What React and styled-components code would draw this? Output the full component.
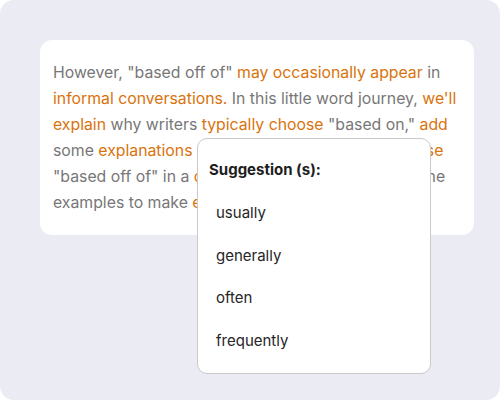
import React from "react";
import styled, { createGlobalStyle } from "styled-components";

const GlobalStyle = createGlobalStyle`
    html, body {
        margin: 0;
        padding: 0;
        background: #ffffff;
    }
    * {
        box-sizing: border-box;
    }
`;

const StyledFrame = styled.div`
    width: 500px;
    height: 400px;
    background: #ebebf3;
    border-radius: 14px;
    padding: 40px 26px 0 40px;
    font-family: Inter, "Noto Sans", sans-serif;
`;

const StyledCard = styled.div`
    position: relative;
    width: 434px;
    background: #ffffff;
    border-radius: 12px;
    padding: 20px 8px 19px 13px;
`;

const StyledText = styled.p`
    margin: 0;
    font-size: 15.8px;
    line-height: 26px;
    color: #777777;
`;

const StyledMark = styled.span`
    color: #d9730d;
`;

const StyledPopup = styled.div`
    position: absolute;
    left: 157px;
    top: 98px;
    width: 234px;
    height: 236px;
    background: #ffffff;
    border: 1px solid #cacaca;
    border-radius: 10px;
    padding: 20px 12px 0 11px;
    display: flex;
    flex-direction: column;
`;

const StyledPopupTitle = styled.div`
    font-size: 15px;
    font-weight: 700;
    line-height: 22px;
    color: #1e1e1e;
    margin-bottom: 11px;
`;

const StyledOption = styled.div`
    font-size: 15px;
    line-height: 22px;
    color: #262626;
    padding: 10px 7px;
    margin-bottom: 0.5px;
    cursor: pointer;
`;

const suggestions = ["usually", "generally", "often", "frequently"];

const App = () => {
    return (
        <>
            <GlobalStyle />
            <StyledFrame>
                <StyledCard>
                    <StyledText>
                        However, "based off of" <StyledMark>may occasionally appear</StyledMark> in{" "}
                        <StyledMark>informal conversations.</StyledMark> In this little word journey,{" "}
                        <StyledMark>we'll explain</StyledMark> why writers <StyledMark>typically choose</StyledMark>{" "}
                        "based on," <StyledMark>add</StyledMark> some <StyledMark>explanations</StyledMark> about why
                        some users <StyledMark>might use</StyledMark> "based off of" in a{" "}
                        <StyledMark>casual context</StyledMark>, and provide some examples to make{" "}
                        <StyledMark>everything</StyledMark> clear.
                    </StyledText>
                    <StyledPopup>
                        <StyledPopupTitle>Suggestion (s):</StyledPopupTitle>
                        {suggestions.map((word) => (
                            <StyledOption key={word}>{word}</StyledOption>
                        ))}
                    </StyledPopup>
                </StyledCard>
            </StyledFrame>
        </>
    );
};

export default App;
